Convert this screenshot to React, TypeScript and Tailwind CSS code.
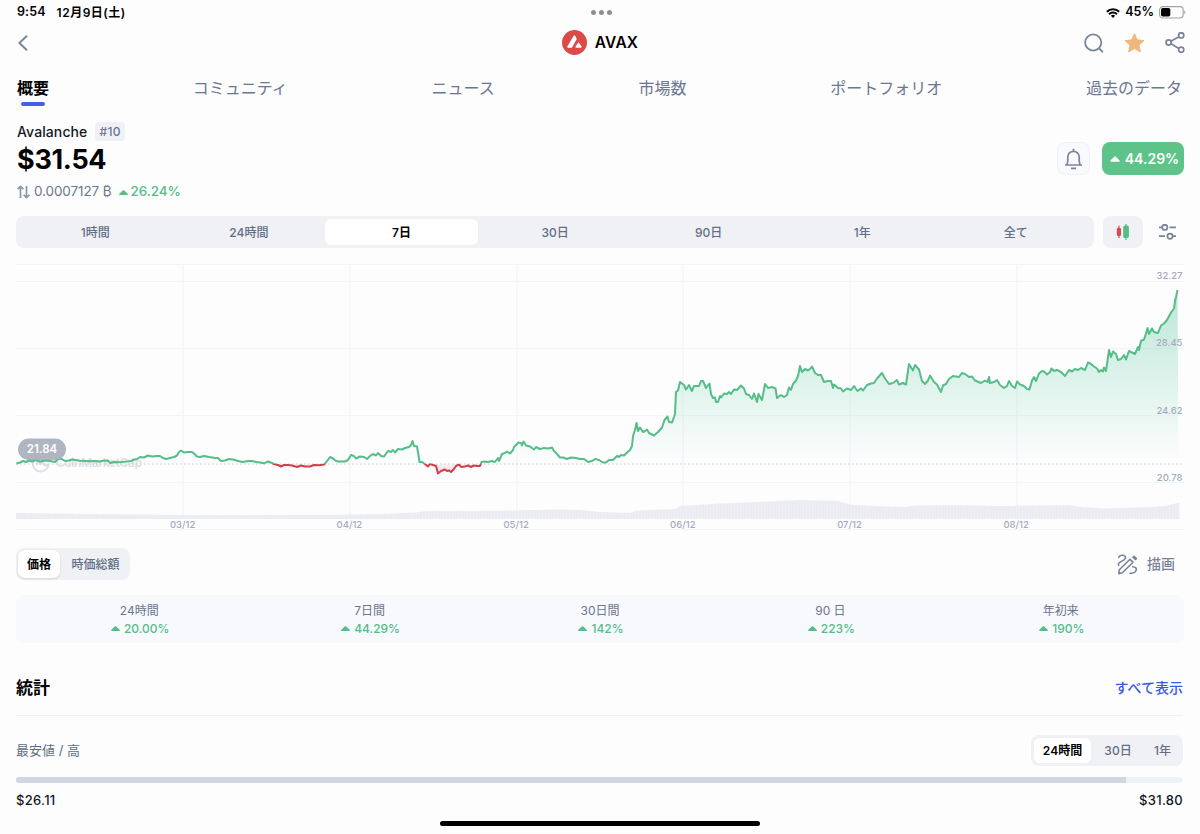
import React from "react";

const tabs = ["概要", "コミュニティ", "ニュース", "市場数", "ポートフォリオ", "過去のデータ"];
const ranges = ["1時間", "24時間", "7日", "30日", "90日", "1年", "全て"];
const changes = [
  { label: "24時間", value: "20.00%" },
  { label: "7日間", value: "44.29%" },
  { label: "30日間", value: "142%" },
  { label: "90 日", value: "223%" },
  { label: "年初来", value: "190%" },
];

const PRICE =
  "16.5,463.5 20,462.5 23,461 26,462 29,460.5 32,461.5 36,460 40,461.5 45,460.5 50,461 55,462 58,459 61,458.5 65,461 69,460.5 72,459.5 76,460 80,460.8 85,461 90,461.2 95,461 100,461.5 103,460.8 108,460.5 110,463 114,462 118,462.3 122,462 127,461.5 131,461 134,459.5 137,459 140,457 144,457.5 148,455.5 152,456.5 157,456 160,456 163,458 166,459 170,458 174,457 177,455.5 179,452 181,450.5 184,452.5 188,452 192,452 194,453.5 197,456.5 200,457 204,456 209,457 214,457.8 218,458 221,461 225,460.5 229,459 233,459.5 238,461 243,462 248,461 252,461 256,462 260,462.5 264,463.3 268,461.5 272,463 274,464 278,465 281,466.5 284,465 288,465 292,465.5 297,467 301,465.5 305,466.5 310,466.5 314,465 319,465.2 324,464.5 326,462.5 330,457 333,458.5 336,461 339,461.5 345,461.5 348,460 351,455 354,456 356,458.5 360,456.5 364,457 367,459 370,456 373,454 376,455.5 378,453 381,456 384,456.5 388,451 391,452 393,450 395,452.5 398,449 402,449.5 405,448 409,447 411,445 412.5,441 414,446 417,446.5 418.5,455 419.5,462 422,462 425,464 428,466.5 430,464 433,465 436,466 438,473.5 441,471 445,469.5 447,471 449,470.5 451,472 454,469 456,466 459,464.5 461,467 465,466.5 468,465.5 471,467 474,465.5 477,466 480,466 481.5,462 484,461.5 488,462 492,461 495,462 498,458 499,461 502,454 505,453 507,451.5 510,453.5 513,450 514,447 517,444 518.5,442.5 521,443 522,445.5 523.5,441.5 526,445.5 530,446.5 534,449.5 536,447 540,449 544,448 548,448.5 552,447.5 554,451 557,454 560,457.5 563,457.5 567,459 571,457.5 576,458 580,459 584,459 588,462 592,461 595,459 599,460 603,462.5 606,462.5 609,460 613,460 617,456 619,457 621,455 624,455.5 627,452.5 630,450 632,446 633,436 635,430 636.5,423 638,431 640,427.5 643,432 645,431 647,429.5 649,433 654,435.5 658,432 662,427.5 664.5,420 667.5,416.5 669,422 672,422.5 674,417 675,414 676,392 678,390.5 680,382 684,385 686,389.5 689,385 692,391 694,386 699,386 701,381 703,381 706,388 709.5,383.5 711,394 713,398 715,397.5 716,402 718,402 720,396 721,397.5 724,393.5 727,394 729,392 731,394 734,389.5 737,390 741,385.5 744,388.5 746,394 749,395 752,399 754,393.5 757,402 758.5,394 762,400 765,384 768,388 772,387 775.5,388.5 777,398 781,395 784,397 787,395 789,387.5 791,390 793,384 796,380.5 798,376 800,366 802,372 805,369 808,370.5 810,369 812,366.5 815,373 818,375 821,375 824,382 828,381 831,381 833,388 834,384.5 838,388 841,388.5 843,391.5 847,388.5 851,390 854,386 857.5,391 861,388.5 863,390.5 867,385 871,383.5 874,383 877,378.5 882,373 885,378.5 889,384 893,383 897,380 899,384.5 903,383 906,384.5 909,364 913,370.5 915,365 919,369.5 922,381 925,384 928,380.5 930,375.5 934,382 937,384.5 941,392 943,385.5 946,384 949,379 953,376 959,377 962,373 965,374 969,377 972,376.5 975,380.5 981,383 985,380.5 987.5,382 989,377 990,383 994,382 997,380 1000,385 1004,388 1007,386 1009,381 1012,386 1015,388 1017,381.5 1020,384.5 1024,386 1027,389 1029.5,389.5 1032,380.5 1034,377 1036,381 1039,373.5 1042,371 1044,371.5 1047,374.5 1050,372 1051.5,368.5 1054,371 1057,370 1061,372 1065,376 1069,370 1072,371.5 1075,369 1078,370 1081,368 1085,370 1088,362.5 1091,364 1094,366.5 1097,368.5 1099,372 1101,370 1103,371.5 1104,367.5 1106,371 1109,350 1111,357 1113,351.5 1116,354 1118,360 1121,359 1124,355 1126,359.5 1129,351 1132,352.5 1135,354 1138,347 1139,350 1141,341 1144,339.5 1146,333.5 1147.5,328 1149,334 1152,328.5 1154,332 1158,333 1161,325.5 1164,323.5 1167,320 1171,312.5 1174,308.5 1175,301 1176,297 1177.5,290";

const VOLUME =
  "16,519 16,513 60,513.5 100,514 180,515 340,514.8 380,514 417,512.5 425,511 480,511 560,509.5 580,510 600,512 630,513 637,510.5 675,509 680,506 720,503.5 770,501.5 800,500 838,501 850,504.5 885,506.5 905,507 915,505.5 950,505 1000,506 1070,505 1080,507 1105,508.5 1150,507 1165,506 1179.5,502.5 1179.5,519";

function Caret({ className }: { className: string }) {
  return (
    <svg viewBox="0 0 9 5" className={className} fill="currentColor">
      <path d="M4 .35a.8.8 0 0 1 1 0l3.6 3.5c.5.5.2 1.15-.5 1.15H.9c-.7 0-1-.65-.5-1.15z" />
    </svg>
  );
}

function StatusBar() {
  return (
    <div className="flex h-6 items-center justify-between pl-[17px] pr-[14px] text-[12px] font-semibold text-black">
      <div className="flex w-[200px] items-center gap-[11px] pt-px leading-none">
        <span className="text-[12.5px] tracking-[0.1px]">9:54</span>
        <span className="text-[12px] tracking-[0.5px]">12月9日(土)</span>
      </div>
      <div className="flex gap-[3px]">
        <span className="size-[5px] rounded-full bg-[#8f8f92]" />
        <span className="size-[5px] rounded-full bg-[#8f8f92]" />
        <span className="size-[5px] rounded-full bg-[#8f8f92]" />
      </div>
      <div className="flex w-[200px] items-center justify-end pt-px leading-none">
        <svg viewBox="0 0 14 10" className="mr-[5px] h-[10px] w-[14px]" fill="none" stroke="#000" strokeWidth="1.9">
          <path d="M.8 3.8a8.9 8.9 0 0 1 12.4 0" />
          <path d="M3 6.2a5.7 5.7 0 0 1 8 0" />
          <path d="M7 9.9 4.9 7.8a3 3 0 0 1 4.2 0z" fill="#000" stroke="none" />
        </svg>
        <span className="mr-[5px] text-[12.5px]">45%</span>
        <svg viewBox="0 0 27 13" className="h-[13px] w-[27px]">
          <rect x=".6" y=".6" width="23.6" height="11.4" rx="3.4" fill="none" stroke="#a3a3a3" strokeWidth="1.1" />
          <rect x="2" y="2" width="9.3" height="8.6" rx="1.8" />
          <path d="M25.3 4.3c1.5.5 1.5 3.5 0 4z" fill="#a3a3a3" />
        </svg>
      </div>
    </div>
  );
}

function NavBar() {
  return (
    <div className="flex h-[37px] items-center justify-between pl-[18px] pr-[15px]">
      <div className="w-[200px]">
        <svg viewBox="0 0 10 16" className="h-4 w-[10px]" fill="none" stroke="#7a8499" strokeWidth="1.9" strokeLinecap="round" strokeLinejoin="round">
          <path d="M8.5 1.2 1.4 8l7.1 6.8" />
        </svg>
      </div>
      <div className="flex items-center gap-2 pr-[3px]">
        <svg viewBox="0 0 24 24" className="size-[25px]">
          <circle cx="12" cy="12" r="12" fill="#dc4a49" />
          <path d="M11.2 5.5c.4-.7 1-.7 1.4 0l1.2 2.1c.3.6.3 1.1 0 1.7l-3.9 6.9c-.3.6-.7.8-1.3.8H5.9c-.9 0-1.1-.6-.7-1.3zM15.2 12.6c.4-.7 1-.7 1.4 0l2.1 3.1c.4.7.1 1.3-.7 1.3h-4.2c-.8 0-1.1-.6-.7-1.3z" fill="#fff" />
        </svg>
        <span className="text-[15.5px] font-semibold leading-none tracking-[0.2px] text-black">AVAX</span>
      </div>
      <div className="flex w-[200px] items-center justify-end gap-5">
        <svg viewBox="0 0 20 20" className="size-5" fill="none" stroke="#7a8499" strokeWidth="1.8" strokeLinecap="round">
          <circle cx="9.2" cy="9.5" r="8.1" />
          <path d="m15.2 15.5 3.2 3.2" />
        </svg>
        <svg viewBox="0 0 22 22" className="h-[22px] w-[21px]" fill="#edb87c" stroke="#edb87c" strokeWidth="1" strokeLinejoin="round">
          <path d="m11 1.2 2.9 6.5 7 .8-5.2 4.8 1.5 7.1L11 16.8l-6.2 3.6 1.5-7.1L1.1 8.5l7-.8z" />
        </svg>
        <svg viewBox="0 0 20 21" className="h-[21px] w-5" fill="none" stroke="#7a8499" strokeWidth="1.7">
          <circle cx="16.2" cy="3.4" r="2.6" />
          <circle cx="3.6" cy="10.5" r="2.6" />
          <circle cx="16.2" cy="17.7" r="2.6" />
          <path d="m5.9 9.2 8-4.5M5.9 11.8l8 4.6" />
        </svg>
      </div>
    </div>
  );
}

function Tabs() {
  return (
    <div className="flex h-12 justify-between pl-[17px] pr-[18px] pt-[18px] text-[16px] leading-[18px] text-[#6b7690]">
      {tabs.map((tab, i) =>
        i === 0 ? (
          <div key={tab} className="flex flex-col items-center gap-[5px] font-bold text-black">
            <span>{tab}</span>
            <span className="h-1 w-6 rounded-full bg-[#4560e6]" />
          </div>
        ) : (
          <span key={tab}>{tab}</span>
        )
      )}
    </div>
  );
}

function Header() {
  return (
    <div className="flex h-[107px] items-start justify-between pl-[17px] pr-4">
      <div className="flex flex-col pt-[13px]">
        <div className="flex h-[19px] items-center gap-[8px]">
          <span className="text-[14px] font-medium leading-none tracking-[0.1px] text-[#15181f]">Avalanche</span>
          <span className="flex h-[19px] items-center rounded-[4px] bg-[#eff1f5] px-1 text-[12px] font-medium leading-none tracking-[0.4px] text-[#6b7690]">#10</span>
        </div>
        <div className="flex h-9 items-center text-[27px] font-bold leading-none tracking-[-0.3px] text-black">$31.54</div>
        <div className="flex h-[30px] items-center text-[13.5px] leading-none">
          <svg viewBox="0 0 13 14" className="mr-[4px] h-[14px] w-[13px]" fill="none" stroke="#8b95a8" strokeWidth="1.7">
            <path d="M3.5 13V1.8M.6 4.2l2.9-2.7 2.9 2.7M9.5 1v11.2M6.6 9.8l2.9 2.700 2.900-2.700" />
          </svg>
          <span className="tracking-[-0.1px] text-[#6b7690]">0.0007127 ₿</span>
          <Caret className="ml-[7px] mr-[3px] h-[5px] w-[9px] text-[#55bd88]" />
          <span className="font-medium tracking-[-0.1px] text-[#55bd88]">26.24%</span>
        </div>
      </div>
      <div className="flex items-center gap-3 pt-[33px]">
        <div className="flex size-[33px] items-center justify-center rounded-lg border border-[#eff1f6] bg-[#f9fafd]">
          <svg viewBox="0 0 19 22" className="h-[22px] w-[19px]" fill="none" stroke="#7a8499" strokeWidth="1.7" strokeLinejoin="round">
            <path d="M1 17h17M2.700 17c.8-1.200 1.100-2.700 1.100-4.800V9a5.700 5.700 0 0 1 11.400 0v3.200c0 2.100.3 3.600 1.100 4.800M9.500 3.200V.8M7 20.400h5" />
          </svg>
        </div>
        <div className="flex h-[33px] w-[82px] items-center justify-center gap-[5px] rounded-lg bg-[#5ec389] pl-[3px] text-white">
          <Caret className="h-[6px] w-[10px]" />
          <span className="text-[14px] font-semibold leading-none">44.29%</span>
        </div>
      </div>
    </div>
  );
}

function RangeBar() {
  return (
    <div className="flex h-8 px-4">
      <div className="flex w-[1078px] rounded-lg bg-[#eff1f5] px-[2px] py-[3px]">
        {ranges.map((r) => (
          <div
            key={r}
            className={
              r === "7日"
                ? "flex flex-1 items-center justify-center rounded-md bg-white pt-px text-[12px] font-semibold leading-none text-black"
                : "flex flex-1 items-center justify-center pl-px pt-px text-[12px] font-medium leading-none text-[#616e85]"
            }
          >
            {r}
          </div>
        ))}
      </div>
      <div className="ml-[9px] flex w-10 items-center justify-center rounded-lg bg-[#eff1f5]">
        <svg viewBox="0 0 14 16" className="h-4 w-[14px]">
          <path d="M3 1.700v12.300" stroke="#d9475a" strokeWidth="1.200" />
          <rect x=".8" y="3.800" width="4.300" height="8.200" rx="1.500" fill="#d9475a" />
          <path d="M10 0v16" stroke="#55bd88" strokeWidth="1.300" />
          <rect x="7.200" y="1.500" width="5.700" height="12.600" rx="1.700" fill="#55bd88" />
        </svg>
      </div>
      <div className="ml-[15px] flex items-center">
        <svg viewBox="0 0 19 16" className="h-4 w-[19px]" fill="none" stroke="#7a8499" strokeWidth="1.700">
          <circle cx="6.800" cy="3.400" r="2.600" />
          <path d="M1 3.400h3M11.500 3.400H18M1 12.200h6M15 12.200h3" />
          <circle cx="12" cy="12.200" r="2.600" />
        </svg>
      </div>
    </div>
  );
}

function PriceChart() {
  const area = `${PRICE} 1178.5,464 16.5,464`;
  return (
    <svg viewBox="0 248 1200 292" className="block h-[292px] w-full">
      <defs>
        <linearGradient id="gain" gradientUnits="userSpaceOnUse" x1="0" y1="290" x2="0" y2="462">
          <stop offset="0" stopColor="#5ec9a0" stopOpacity=".42" />
          <stop offset="1" stopColor="#5ec9a0" stopOpacity="0" />
        </linearGradient>
        <linearGradient id="loss" gradientUnits="userSpaceOnUse" x1="0" y1="464" x2="0" y2="474">
          <stop offset="0" stopColor="#d9475a" stopOpacity=".05" />
          <stop offset="1" stopColor="#d9475a" stopOpacity=".25" />
        </linearGradient>
        <pattern id="bars" width="3" height="20" patternUnits="userSpaceOnUse">
          <rect width="3" height="20" fill="#eeeff4" />
          <rect width="2" height="20" fill="#ebecf2" />
        </pattern>
        <clipPath id="above">
          <rect x="0" y="248" width="1200" height="216" />
        </clipPath>
        <clipPath id="below">
          <rect x="0" y="464" width="1200" height="40" />
        </clipPath>
      </defs>

      <g stroke="#f2f5fa" strokeWidth="1">
        {[264.5, 281.5, 348.5, 415.5, 482.5, 529.5].map((y) => (
          <path key={y} d={`M16 ${y}H1184`} />
        ))}
        {[183, 350, 517, 683, 850, 1017].map((x) => (
          <path key={x} d={`M${x} 264V519`} strokeWidth="1.500" />
        ))}
      </g>

      <polygon points={VOLUME} fill="url(#bars)" />

      <g fill="none" stroke="#dcdfe6" strokeWidth="1.800">
        <path d="M34 459a8 8 0 1 0 14.500 6M37 465v-4l3 3 3-3v3q2 3 5 0" />
      </g>
      <text x="56" y="466.500" fontSize="12" fontWeight="600" fill="#dcdfe6" textLength="86">
        CoinMarketCap
      </text>

      <path d="M16 464H1182" stroke="#c9ccd4" strokeWidth="1" strokeDasharray="1.500 2.500" />

      <polygon points={area} fill="url(#gain)" clipPath="url(#above)" />
      <polygon points={area} fill="url(#loss)" clipPath="url(#below)" />
      <polyline points={PRICE} fill="none" stroke="#55bd88" strokeWidth="2" strokeLinejoin="round" clipPath="url(#above)" />
      <polyline points={PRICE} fill="none" stroke="#d03f4a" strokeWidth="2" strokeLinejoin="round" clipPath="url(#below)" />

      <rect x="18" y="438.500" width="48" height="21.500" rx="10.750" fill="#a9afbc" fillOpacity=".93" />
      <text x="42" y="453.300" textAnchor="middle" fontSize="11.500" fontWeight="600" fill="#fff">
        21.84
      </text>

      <g fontSize="9.500" fontWeight="500" fill="#a3abbc">
        {[
          { v: "32.27", y: 279.3 },
          { v: "28.45", y: 346.3 },
          { v: "24.62", y: 413.6 },
          { v: "20.78", y: 480.8 },
        ].map((t) => (
          <text key={t.v} x="1182.500" y={t.y} textAnchor="end">
            {t.v}
          </text>
        ))}
        {["03/12", "04/12", "05/12", "06/12", "07/12", "08/12"].map((d, i) => (
          <text key={d} x={182.7 + i * 166.7} y="527.800" textAnchor="middle">
            {d}
          </text>
        ))}
      </g>
    </svg>
  );
}

function ChartModes() {
  return (
    <div className="flex h-[55px] items-start justify-between pl-4 pr-[25px] pt-2">
      <div className="flex h-8 rounded-lg bg-[#eff1f5] p-[2px] text-[12px] leading-none">
        <div className="flex w-[42px] items-center justify-center rounded-[7px] bg-white pt-px font-bold text-black shadow-sm">価格</div>
        <div className="flex w-[68px] items-center justify-center pl-[3px] pt-px font-medium text-[#616e85]">時価総額</div>
      </div>
      <div className="flex h-8 items-center gap-[9px]">
        <svg viewBox="0 0 21 21" className="size-[21px]" fill="none" stroke="#7a8499" strokeWidth="1.600" strokeLinecap="round" strokeLinejoin="round">
          <path d="M1.700 3.200C3 1.200 6 .6 7.700 2c2 1.800.2 3.600-2.300 4.900C2.500 8.400.6 9.500 1.600 11.300" />
          <path d="m2.300 15.700 10.700-10.400 3 2.900L5.400 18.700l-3.600.9z" />
          <path d="m16 3.200 1-.9 2.400 2.300-1 .9z" fill="#7a8499" />
          <path d="M15.700 12.700c2.500.2 4 1.400 3.600 3.200-.5 2.300-3.600 3.500-6.200 3.500" />
        </svg>
        <span className="text-[14px] font-medium leading-none text-[#7a8499]">描画</span>
      </div>
    </div>
  );
}

function Changes() {
  return (
    <div className="mx-4 flex h-12 rounded-lg bg-[#f8f9fd] px-2">
      {changes.map((c) => (
        <div key={c.label} className="flex flex-1 flex-col items-center pt-[7px]">
          <span className="flex h-[18px] items-center text-[12px] leading-none text-[#6b7690]">{c.label}</span>
          <span className="flex h-[18px] items-center gap-1 pl-[2px] text-[12px] font-medium leading-none text-[#55bd88]">
            <Caret className="mb-px h-[5px] w-[9px]" />
            {c.value}
          </span>
        </div>
      ))}
    </div>
  );
}

function Statistics() {
  return (
    <div className="pl-4 pr-[17px]">
      <div className="flex h-[73px] items-center justify-between border-b border-[#eff1f5] pt-[17px]">
        <h2 className="pt-[2px] text-[17px] font-bold leading-none text-black">統計</h2>
        <span className="text-[14px] font-medium leading-none text-[#3a5be0]">すべて表示</span>
      </div>
      <div className="flex h-[61px] items-center justify-between pt-[8px]">
        <span className="text-[13px] leading-none text-[#616e85]">最安値 / 高</span>
        <div className="flex h-[31px] rounded-lg bg-[#eff1f5] p-[3px] text-[12px] font-medium leading-none text-[#616e85]">
          <span className="flex w-[57px] items-center justify-center rounded-md bg-white pt-px font-semibold text-black">24時間</span>
          <span className="flex w-[54px] items-center justify-center pt-px">30日</span>
          <span className="flex w-[35px] items-center justify-center pt-px">1年</span>
        </div>
      </div>
      <div className="h-[6px] overflow-hidden rounded-full bg-[#eff1f8]">
        <div className="h-full w-[1110px] bg-[#cfd7e1]" />
      </div>
      <div className="flex h-[34px] items-center justify-between text-[13px] font-medium leading-none tracking-[0.3px] text-[#15181f]">
        <span>$26.11</span>
        <span>$31.80</span>
      </div>
    </div>
  );
}

export default function App() {
  return (
    <div
      lang="ja"
      className="flex h-[834px] w-[1200px] flex-col overflow-hidden bg-[#fdfdfe] font-['Inter','Noto_Sans_CJK_JP',sans-serif]"
    >
      <StatusBar />
      <NavBar />
      <Tabs />
      <Header />
      <RangeBar />
      <PriceChart />
      <ChartModes />
      <Changes />
      <Statistics />
      <div className="mx-auto mt-1 h-[5px] w-[320px] rounded-full bg-black" />
    </div>
  );
}
